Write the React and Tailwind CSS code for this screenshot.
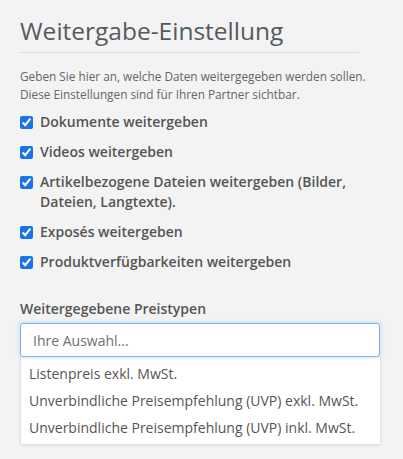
import { useState } from "react";

const options = [
    { key: "documents", label: "Dokumente weitergeben" },
    { key: "videos", label: "Videos weitergeben" },
    { key: "files", label: "Artikelbezogene Dateien weitergeben (Bilder, Dateien, Langtexte)." },
    { key: "exposes", label: "Exposés weitergeben" },
    { key: "availability", label: "Produktverfügbarkeiten weitergeben" },
];

const priceTypes = [
    "Listenpreis exkl. MwSt.",
    "Unverbindliche Preisempfehlung (UVP) exkl. MwSt.",
    "Unverbindliche Preisempfehlung (UVP) inkl. MwSt.",
];

const App = () => {
    // alle Checkboxen standardmäßig aktiv
    const [checked, setChecked] = useState(
        Object.fromEntries(options.map((o) => [o.key, true]))
    );

    const toggle = (key) => {
        setChecked({ ...checked, [key]: !checked[key] });
    };

    return (
        <div className="min-h-[459px] bg-[#f3f3f3] px-5 pt-[14px] font-['Open_Sans',sans-serif] text-[#555]">
            <h1 className="text-[24.5px] leading-[33px] text-[#555a5f] pb-[5px] border-b border-[#dcdcdc] mr-[24px]">
                Weitergabe-Einstellung
            </h1>

            <p className="mt-[14px] text-[11.8px] leading-[18px] text-[#666]">
                Geben Sie hier an, welche Daten weitergegeben werden sollen.
                <br />
                Diese Einstellungen sind für Ihren Partner sichtbar.
            </p>

            {/* Checkboxen */}
            <div className="mt-[9px] flex flex-col gap-[10px] pr-[20px]">
                {options.map((o) => (
                    <label key={o.key} className="flex items-start gap-[7px] cursor-pointer">
                        <input
                            type="checkbox"
                            checked={checked[o.key]}
                            onChange={() => toggle(o.key)}
                            className="mt-[4px] h-[13px] w-[13px] shrink-0 accent-[#1a73e8]"
                        />
                        <span className="text-[14px] leading-[20px] font-semibold text-[#555]">{o.label}</span>
                    </label>
                ))}
            </div>

            {/* Preistypen */}
            <div className="mt-[27px] text-[14px] leading-[20px] font-semibold text-[#555]">
                Weitergegebene Preistypen
            </div>

            <div className="mt-[4px] mr-[3px]">
                <input
                    type="text"
                    placeholder="Ihre Auswahl..."
                    className="w-full h-[34px] rounded-[3px] border border-[#7eb4ea] bg-white px-[12px] text-[14px] text-[#555] placeholder:text-[#707070] outline-none shadow-[0_0_4px_rgba(102,175,233,0.5)]"
                />
                <ul className="bg-white border border-t-0 border-[#e3e3e3] rounded-b-[2px] shadow-[0_1px_3px_rgba(0,0,0,0.08)] py-[3px] mr-[-1px]">
                    {priceTypes.map((p) => (
                        <li key={p} className="px-[8px] text-[14px] leading-[27px] text-[#555] cursor-pointer">
                            {p}
                        </li>
                    ))}
                </ul>
            </div>
        </div>
    );
};

export default App;
